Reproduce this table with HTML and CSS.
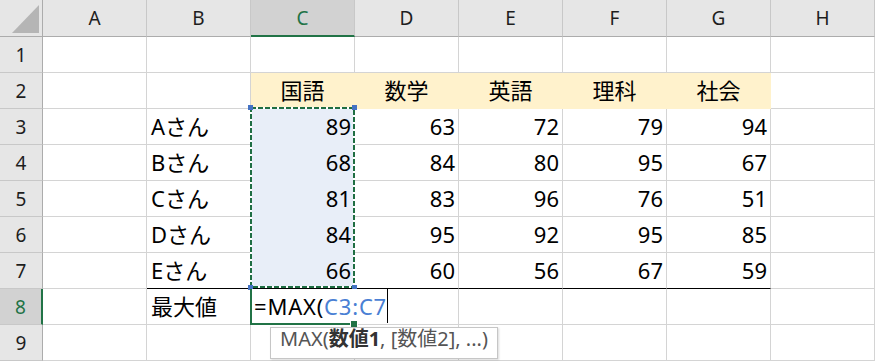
FILE: index.html
```html
<!DOCTYPE html>
<html lang="ja">
<head>
<meta charset="utf-8">
<title>Excel MAX</title>
<link rel="stylesheet" href="styles.css">
</head>
<body>
<div class="sheet">
  <div class="corner"><svg width="42" height="36" viewBox="0 0 42 36"><polygon points="12,33 39,33 39,5" fill="#b5b5b5"/></svg></div>
  <div class="ch">A</div><div class="ch">B</div><div class="ch sel">C</div><div class="ch">D</div><div class="ch">E</div><div class="ch">F</div><div class="ch">G</div><div class="ch">H</div>

  <div class="rh">1</div><div class="c"></div><div class="c"></div><div class="c"></div><div class="c"></div><div class="c"></div><div class="c"></div><div class="c"></div><div class="c"></div>

  <div class="rh">2</div><div class="c"></div><div class="c"></div><div class="c hd">国語</div><div class="c hd">数学</div><div class="c hd">英語</div><div class="c hd">理科</div><div class="c hd">社会</div><div class="c"></div>

  <div class="rh">3</div><div class="c"></div><div class="c t">Aさん</div><div class="c n rng">89</div><div class="c n">63</div><div class="c n">72</div><div class="c n">79</div><div class="c n">94</div><div class="c"></div>

  <div class="rh">4</div><div class="c"></div><div class="c t">Bさん</div><div class="c n rng">68</div><div class="c n">84</div><div class="c n">80</div><div class="c n">95</div><div class="c n">67</div><div class="c"></div>

  <div class="rh">5</div><div class="c"></div><div class="c t">Cさん</div><div class="c n rng">81</div><div class="c n">83</div><div class="c n">96</div><div class="c n">76</div><div class="c n">51</div><div class="c"></div>

  <div class="rh">6</div><div class="c"></div><div class="c t">Dさん</div><div class="c n rng">84</div><div class="c n">95</div><div class="c n">92</div><div class="c n">95</div><div class="c n">85</div><div class="c"></div>

  <div class="rh">7</div><div class="c"></div><div class="c t bb">Eさん</div><div class="c n rng bb">66</div><div class="c n bb">60</div><div class="c n bb">56</div><div class="c n bb">67</div><div class="c n bb">59</div><div class="c"></div>

  <div class="rh sel">8</div><div class="c"></div><div class="c t">最大値</div><div class="c"></div><div class="c"></div><div class="c"></div><div class="c"></div><div class="c"></div><div class="c"></div>

  <div class="rh">9</div><div class="c"></div><div class="c"></div><div class="c"></div><div class="c"></div><div class="c"></div><div class="c"></div><div class="c"></div><div class="c"></div>

  <svg class="ants" width="875" height="361" viewBox="0 0 875 361" shape-rendering="crispEdges">
    <rect x="251" y="108" width="103" height="179" fill="none" stroke="#ffffff" stroke-width="2"/>
    <rect x="251" y="108" width="103" height="179" fill="none" stroke="#1f6e43" stroke-width="2" stroke-dasharray="5 2"/>
  </svg>
  <div class="handle h-tl"></div>
  <div class="handle h-tr"></div>
  <div class="handle h-bl"></div>
  <div class="handle h-br"></div>

  <div class="active"></div>
  <div class="edit">=MAX(<span class="ref">C3:C7</span></div>
  <div class="fill"></div>

  <div class="tip">MAX(<b>数値1</b>, [数値2], ...)</div>
</div>
</body>
</html>
```
FILE: styles.css
```css
* { box-sizing: border-box; }

body {
  margin: 0;
  background: #ffffff;
  font-family: "Noto Sans", "Noto Sans CJK JP", sans-serif;
}

.sheet {
  position: relative;
  display: grid;
  grid-template-columns: 43px repeat(8, 104px);
  grid-template-rows: 37px repeat(9, 36px);
  width: 875px;
  height: 361px;
  overflow: hidden;
}

.c {
  border-right: 1px solid #d4d4d4;
  border-bottom: 1px solid #d4d4d4;
  font-size: 22px;
  line-height: 35px;
  white-space: nowrap;
  color: #000;
}

.t { padding-left: 4px; }
.n { text-align: right; padding-right: 3px; }

.hd {
  text-align: center;
  background: #fff2cc;
  border-color: #fff2cc;
}

.rng {
  background: #e8eef8;
  border-bottom-color: #e8eef8;
}

.bb { border-bottom-color: #000; }

.corner, .ch, .rh {
  background: #e6e6e6;
  font-size: 19px;
  line-height: 37px;
  text-align: center;
  color: #1e1e1e;
}

.corner {
  border-right: 1px solid #acacac;
  border-bottom: 1px solid #acacac;
}
.corner svg { display: block; }

.ch {
  border-right: 1px solid #c8c8c8;
  border-bottom: 1px solid #acacac;
}

.rh {
  border-right: 1px solid #acacac;
  border-bottom: 1px solid #c8c8c8;
}

.ch.sel {
  background: #d2d2d2;
  color: #217346;
  border-bottom: 2px solid #217346;
}

.rh.sel {
  background: #d2d2d2;
  color: #217346;
  border-right: 2px solid #217346;
}

.ants {
  position: absolute;
  left: 0;
  top: 0;
  pointer-events: none;
}

.handle {
  position: absolute;
  width: 5px;
  height: 5px;
  background: #4472c4;
}
.h-tl { left: 248px; top: 105px; }
.h-tr { left: 352px; top: 105px; }
.h-bl { left: 248px; top: 285px; }
.h-br { left: 352px; top: 285px; }

.active {
  position: absolute;
  left: 250px;
  top: 289px;
  width: 106px;
  height: 36px;
  border-left: 2px solid #217346;
  border-bottom: 2px solid #217346;
}

.edit {
  position: absolute;
  left: 252px;
  top: 289px;
  height: 34px;
  background: #fff;
  border-right: 1px solid #000;
  padding-left: 2px;
  padding-right: 0;
  font-size: 22px;
  line-height: 35px;
  letter-spacing: 0.8px;
  white-space: nowrap;
  color: #000;
}

.ref { color: #4a7fd4; }

.fill {
  position: absolute;
  left: 350px;
  top: 320px;
  width: 8px;
  height: 8px;
  background: #217346;
  border: 1px solid #fff;
}

.tip {
  position: absolute;
  left: 270px;
  top: 327px;
  width: 228px;
  height: 32px;
  background: #fff;
  border: 1px solid #c6c6c6;
  box-shadow: 1px 1px 2px rgba(0, 0, 0, 0.15);
  padding-left: 9px;
  font-size: 20px;
  line-height: 22px;
  color: #555;
  white-space: nowrap;
}

.tip b {
  color: #333;
  font-weight: 700;
}
```
